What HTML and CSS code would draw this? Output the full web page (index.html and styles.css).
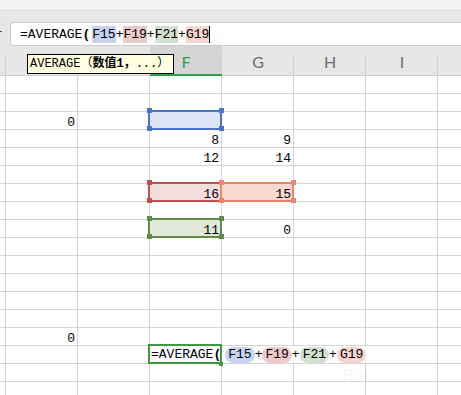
FILE: index.html
```html
<!DOCTYPE html>
<html lang="zh-CN">
<head>
    <meta charset="UTF-8">
    <meta name="viewport" content="width=device-width, initial-scale=1.0">
    <title>AVERAGE</title>

    <link rel="stylesheet" href="styles.css">
</head>
<body>
    <div class="app">
        <div class="topbar"></div>

        <div class="fbar">
            <span class="fmark"></span>
            <div class="finput">=AVERAGE<b class="paren">(</b><span class="hl blue">F15</span>+<span class="hl red">F19</span>+<span class="hl green">F21</span>+<span class="hl salmon">G19</span><span class="caret"></span></div>
        </div>

        <div class="sheet">
            <!-- D and E headers sit under the function tip -->
            <div class="row head">
                <div class="c"></div><div class="c"></div><div class="c"></div><div class="c on">F</div><div class="c">G</div><div class="c">H</div><div class="c">I</div><div class="c"></div>
            </div>
            <!-- 13 -->
            <div class="row"><div class="c"></div><div class="c"></div><div class="c"></div><div class="c"></div><div class="c"></div><div class="c"></div><div class="c"></div><div class="c"></div></div>
            <div class="row"><div class="c"></div><div class="c"></div><div class="c"></div><div class="c"></div><div class="c"></div><div class="c"></div><div class="c"></div><div class="c"></div></div>
            <!-- 15 -->
            <div class="row"><div class="c"></div><div class="c">0</div><div class="c"></div><div class="c rng blue"></div><div class="c"></div><div class="c"></div><div class="c"></div><div class="c"></div></div>
            <div class="row"><div class="c"></div><div class="c"></div><div class="c"></div><div class="c">8</div><div class="c">9</div><div class="c"></div><div class="c"></div><div class="c"></div></div>
            <div class="row"><div class="c"></div><div class="c"></div><div class="c"></div><div class="c">12</div><div class="c">14</div><div class="c"></div><div class="c"></div><div class="c"></div></div>
            <div class="row"><div class="c"></div><div class="c"></div><div class="c"></div><div class="c"></div><div class="c"></div><div class="c"></div><div class="c"></div><div class="c"></div></div>
            <!-- 19 -->
            <div class="row"><div class="c"></div><div class="c"></div><div class="c"></div><div class="c rng red">16</div><div class="c rng salmon">15</div><div class="c"></div><div class="c"></div><div class="c"></div></div>
            <div class="row"><div class="c"></div><div class="c"></div><div class="c"></div><div class="c"></div><div class="c"></div><div class="c"></div><div class="c"></div><div class="c"></div></div>
            <!-- 21 -->
            <div class="row"><div class="c"></div><div class="c"></div><div class="c"></div><div class="c rng green">11</div><div class="c">0</div><div class="c"></div><div class="c"></div><div class="c"></div></div>
            <div class="row"><div class="c"></div><div class="c"></div><div class="c"></div><div class="c"></div><div class="c"></div><div class="c"></div><div class="c"></div><div class="c"></div></div>
            <div class="row"><div class="c"></div><div class="c"></div><div class="c"></div><div class="c"></div><div class="c"></div><div class="c"></div><div class="c"></div><div class="c"></div></div>
            <div class="row"><div class="c"></div><div class="c"></div><div class="c"></div><div class="c"></div><div class="c"></div><div class="c"></div><div class="c"></div><div class="c"></div></div>
            <div class="row"><div class="c"></div><div class="c"></div><div class="c"></div><div class="c"></div><div class="c"></div><div class="c"></div><div class="c"></div><div class="c"></div></div>
            <div class="row"><div class="c"></div><div class="c"></div><div class="c"></div><div class="c"></div><div class="c"></div><div class="c"></div><div class="c"></div><div class="c"></div></div>
            <!-- 27 -->
            <div class="row"><div class="c"></div><div class="c">0</div><div class="c"></div><div class="c"></div><div class="c"></div><div class="c"></div><div class="c"></div><div class="c"></div></div>
            <!-- 28: editing -->
            <div class="row"><div class="c"></div><div class="c"></div><div class="c"></div><div class="c edit"><span class="ftext">=AVERAGE<b class="paren">(</b><span class="args"><span class="pill blue">F15</span>+<span class="pill red">F19</span>+<span class="pill green">F21</span>+<span class="pill salmon">G19</span></span></span></div><div class="c"></div><div class="c"></div><div class="c"></div><div class="c"></div></div>
            <div class="row"><div class="c"></div><div class="c"></div><div class="c"></div><div class="c"></div><div class="c"></div><div class="c"></div><div class="c"></div><div class="c"></div></div>
            <div class="row"><div class="c"></div><div class="c"></div><div class="c"></div><div class="c"></div><div class="c"></div><div class="c"></div><div class="c"></div><div class="c"></div></div>
        </div>

        <div class="tip">AVERAGE（<b>数值1，</b>...）</div>
        <div class="mark">Bai</div>
    </div>
</body>
</html>
```

FILE: styles.css
```css
* {
    margin: 0;
    padding: 0;
    box-sizing: border-box;
}

body {
    background: #fff;
    font-family: "Liberation Mono", "Noto Sans CJK SC", monospace;
    font-size: 13px;
    color: #000;
}

.app {
    position: relative;
    width: 461px;
    height: 395px;
    overflow: hidden;
}

.topbar {
    height: 9px;
    background: #f3f3f3;
}

/* formula bar */
.fbar {
    display: flex;
    align-items: flex-start;
    height: 37px;
    padding-top: 13px;
    background: #e7e7e7;
}

.fmark {
    width: 2px;
    height: 1px;
    margin-top: 9px;
    background: #555;
}

.finput {
    flex: 1;
    display: flex;
    align-items: center;
    height: 24px;
    margin-left: 8px;
    padding-left: 9px;
    background: #fff;
    border: 1px solid #cbcbcb;
    border-right: none;
    border-radius: 4px 0 0 4px;
    white-space: pre;
}

.paren {
    font-weight: bold;
    margin-right: 2px;
}

.hl {
    display: inline-block;
    line-height: 17px;
}

.hl.blue { background: #c6d3ee; }
.hl.red { background: #ebcaca; }
.hl.green { background: #d4dfcf; }
.hl.salmon { background: #f6d6d0; }

.caret {
    display: inline-block;
    width: 1px;
    height: 17px;
    background: #000;
}

/* sheet */
.row {
    display: flex;
}

.c {
    position: relative;
    flex: none;
    width: 72px;
    height: 18px;
    padding: 3px 2px 0 0;
    border-right: 1px solid #d5d5d5;
    border-bottom: 1px solid #d5d5d5;
    text-align: right;
    line-height: 16px;
    white-space: nowrap;
}

.c:first-child {
    width: 6px;
}

.c:last-child {
    flex: 1;
    border-right: none;
}

.head .c {
    height: 30px;
    padding: 8px 0 0;
    background: #e6e6e6;
    border-right: none;
    border-bottom: 1px solid #cfcfcf;
    font-family: Lato, "Liberation Sans", sans-serif;
    font-size: 16px;
    color: #6d6d6d;
    text-align: center;
}

.head .c::after {
    content: "";
    position: absolute;
    top: 9px;
    right: 0;
    bottom: 0;
    width: 1px;
    background: #d0d0d0;
}

.head .c:last-child::after {
    display: none;
}

.head .c.on {
    background: #d5d5d5;
    border-bottom: 2px solid #2f9f4a;
    color: #2f9f4a;
}

/* referenced ranges */
.rng::before {
    content: "";
    position: absolute;
    top: -2px;
    left: -2px;
    right: -1px;
    bottom: -1px;
    border: 2px solid;
    z-index: 1;
}

.rng::after {
    content: "";
    position: absolute;
    top: -4px;
    left: -3px;
    width: 5px;
    height: 5px;
    z-index: 2;
}

.rng.blue { background: #dce4f5; }
.rng.blue::before { border-color: #4a73cc; }
.rng.blue::after {
    background: #4a73cc;
    box-shadow: 72px 0 #4a73cc, 0 18px #4a73cc, 72px 18px #4a73cc;
}

.rng.red { background: #f2dddc; }
.rng.red::before { border-color: #c0504d; }
.rng.red::after {
    background: #c0504d;
    box-shadow: 72px 0 #c0504d, 0 18px #c0504d, 72px 18px #c0504d;
}

.rng.salmon { background: #fad9cf; }
.rng.salmon::before { border-color: #ea8670; }
.rng.salmon::after {
    background: #ea8670;
    box-shadow: 72px 0 #ea8670, 0 18px #ea8670, 72px 18px #ea8670;
}

.rng.green { background: #e1e9da; }
.rng.green::before { border-color: #5f8b47; }
.rng.green::after {
    background: #5f8b47;
    box-shadow: 72px 0 #5f8b47, 0 18px #5f8b47, 72px 18px #5f8b47;
}

/* cell being edited */
.edit {
    z-index: 3;
    padding: 1px 0 0 1px;
    text-align: left;
}

.edit::before {
    content: "";
    position: absolute;
    top: -2px;
    left: -2px;
    right: -1px;
    bottom: -1px;
    border: 2px solid #3d9b3d;
}

.edit::after {
    content: "";
    position: absolute;
    right: -2px;
    bottom: -3px;
    width: 4px;
    height: 4px;
    background: #3d9b3d;
}

.ftext {
    position: relative;
    z-index: 1;
}

.args {
    padding: 0 4px 0 2px;
    background: #fff;
}

.pill {
    display: inline-block;
    padding: 0 3px;
    border-radius: 8px;
    line-height: 16px;
}

.pill.blue { background: #c9d6f1; }
.pill.red { background: #f0caca; }
.pill.green { background: #d3e0cd; }
.pill.salmon { background: #f7d4cf; }

/* function tip */
.tip {
    position: absolute;
    top: 54px;
    left: 27px;
    width: 147px;
    height: 20px;
    padding-left: 2px;
    background: #ffffe1;
    border: 1px solid #000;
    font-size: 12px;
    line-height: 18px;
    white-space: nowrap;
}

.mark {
    position: absolute;
    left: 343px;
    top: 368px;
    font-family: "Liberation Sans", sans-serif;
    font-size: 16px;
    font-weight: bold;
    line-height: 16px;
    color: rgba(0, 0, 0, 0.05);
}
```
